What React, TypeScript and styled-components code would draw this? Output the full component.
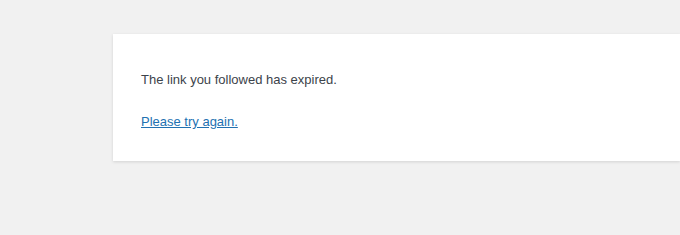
import React from 'react';
import styled, { createGlobalStyle } from 'styled-components';

const GlobalStyle = createGlobalStyle`
	html, body {
		margin: 0;
		padding: 0;
		background: #f1f1f1;
		overflow: hidden;
	}
	body {
		font-family: "Liberation Sans", Arial, sans-serif;
		color: #3c434a;
	}
`;

const Page = styled.div`
	padding: 34px 0 0 113px;
	height: 235px;
	box-sizing: border-box;
`;

const Card = styled.div`
	background: #fff;
	box-shadow: 0 1px 3px rgba(0, 0, 0, 0.13);
	padding: 14px 28px 7px;
`;

const Message = styled.p`
	font-size: 13px;
	line-height: 20px;
	margin: 22px 0;
`;

const RetryLink = styled.a`
	color: #2271b1;
	text-decoration: underline;
`;

export default function App() {
	return (
		<>
			<GlobalStyle />
			<Page>
				<Card>
					<Message>The link you followed has expired.</Message>
					<Message>
						<RetryLink href="#">Please try again.</RetryLink>
					</Message>
				</Card>
			</Page>
		</>
	);
}
